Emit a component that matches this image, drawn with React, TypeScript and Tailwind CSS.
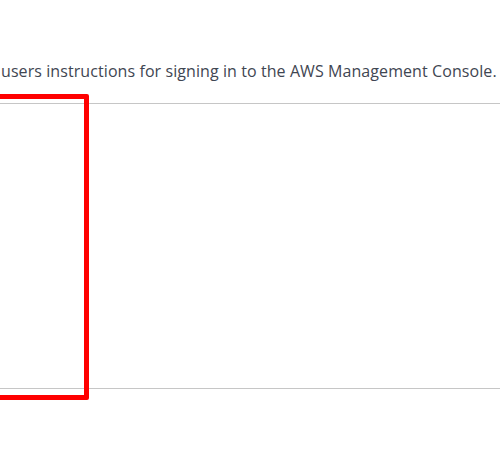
export default function App() {
  return (
    <div className="relative w-[500px] h-[464px] overflow-hidden bg-white font-['Open_Sans',sans-serif]">
      <p className="pt-[59px] pl-[1px] whitespace-nowrap text-[16px] leading-[24px] tracking-[0.08px] text-[#3f4652]">
        users instructions for signing in to the AWS Management Console.
      </p>
      <div className="mt-[20px] h-[286px] border-y border-[#c6c6c6]" />
      <div className="absolute left-[-20px] top-[94px] w-[109px] h-[306px] border-[5px] border-[#ff0000] rounded-[2px]" />
    </div>
  );
}
